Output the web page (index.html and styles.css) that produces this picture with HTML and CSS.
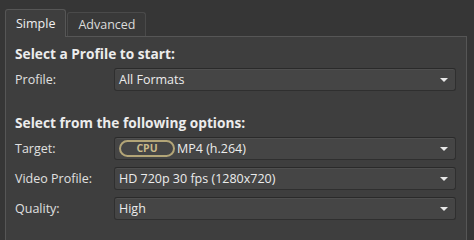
FILE: index.html
```html
<!DOCTYPE html>
<html lang="en">
<head>
    <meta charset="UTF-8">
    <title>Output Settings</title>
    <link rel="stylesheet" href="styles.css">
</head>
<body>

    <div class="tabs">
        <div class="tab active">Simple</div>
        <div class="tab">Advanced</div>
    </div>

    <div class="panel">
        <div class="section-title">Select a Profile to start:</div>
        <div class="row">
            <div class="label">Profile:</div>
            <div class="combo">All Formats<span class="arrow"></span></div>
        </div>

        <div class="section-title second">Select from the following options:</div>
        <div class="row">
            <div class="label">Target:</div>
            <div class="combo"><span class="badge">CPU</span>MP4 (h.264)<span class="arrow"></span></div>
        </div>
        <div class="row">
            <div class="label">Video Profile:</div>
            <div class="combo">HD 720p 30 fps (1280x720)<span class="arrow"></span></div>
        </div>
        <div class="row">
            <div class="label">Quality:</div>
            <div class="combo">High<span class="arrow"></span></div>
        </div>
    </div>

</body>
</html>
```

FILE: styles.css
```css
body {
    font-family: 'Open Sans', 'DejaVu Sans', sans-serif;
    font-size: 12.5px;
    background-color: #363636;
    color: #e6e6e6;
    margin: 0;
    padding: 9px 0 0 5px;
    height: 231px;
    overflow: hidden;
}

.tabs {
    display: flex;
    align-items: flex-end;
    height: 27px;
}

.tab {
    height: 24px;
    line-height: 23px;
    padding: 0 10px;
    margin-right: 1px;
    background-color: #393939;
    border: 1px solid #4a4a4a;
    border-bottom: none;
    border-radius: 3px 3px 0 0;
    box-sizing: border-box;
    color: #dcdcdc;
}

.tab.active {
    height: 28px;
    line-height: 27px;
    background-color: #3e3e3e;
    border-color: #565656;
    position: relative;
    top: 1px;
    color: #f0f0f0;
}

.panel {
    width: 462px;
    height: 204px;
    box-sizing: border-box;
    background-color: #3e3e3e;
    border: 1px solid #565656;
    border-bottom: none;
    padding: 8px 10px 0 9px;
}

.section-title {
    font-weight: bold;
    font-size: 13.7px;
    line-height: 18px;
    color: #ececec;
    margin-bottom: 5px;
}

.section-title.second {
    margin-top: 23px;
}

.row {
    display: flex;
    align-items: center;
    margin-bottom: 7px;
}

.label {
    width: 99px;
    color: #e0e0e0;
}

.combo {
    flex: 1;
    height: 23px;
    box-sizing: border-box;
    display: flex;
    align-items: center;
    padding-left: 4px;
    background-color: #454545;
    border: 1px solid #2f2f2f;
    border-top-color: #2a2a2a;
    box-shadow: inset 0 1px 0 #4f4f4f;
    border-radius: 3px;
    color: #ececec;
    position: relative;
}

.arrow {
    position: absolute;
    right: 7px;
    top: 9px;
    width: 0;
    height: 0;
    border-left: 4px solid transparent;
    border-right: 4px solid transparent;
    border-top: 4px solid #e8e8e8;
}

.badge {
    width: 56px;
    height: 17px;
    box-sizing: border-box;
    border: 2px solid #b3a577;
    border-radius: 9px;
    color: #c9b98a;
    font-size: 10.5px;
    font-weight: bold;
    line-height: 13px;
    text-align: center;
    margin-right: 2px;
}
```
